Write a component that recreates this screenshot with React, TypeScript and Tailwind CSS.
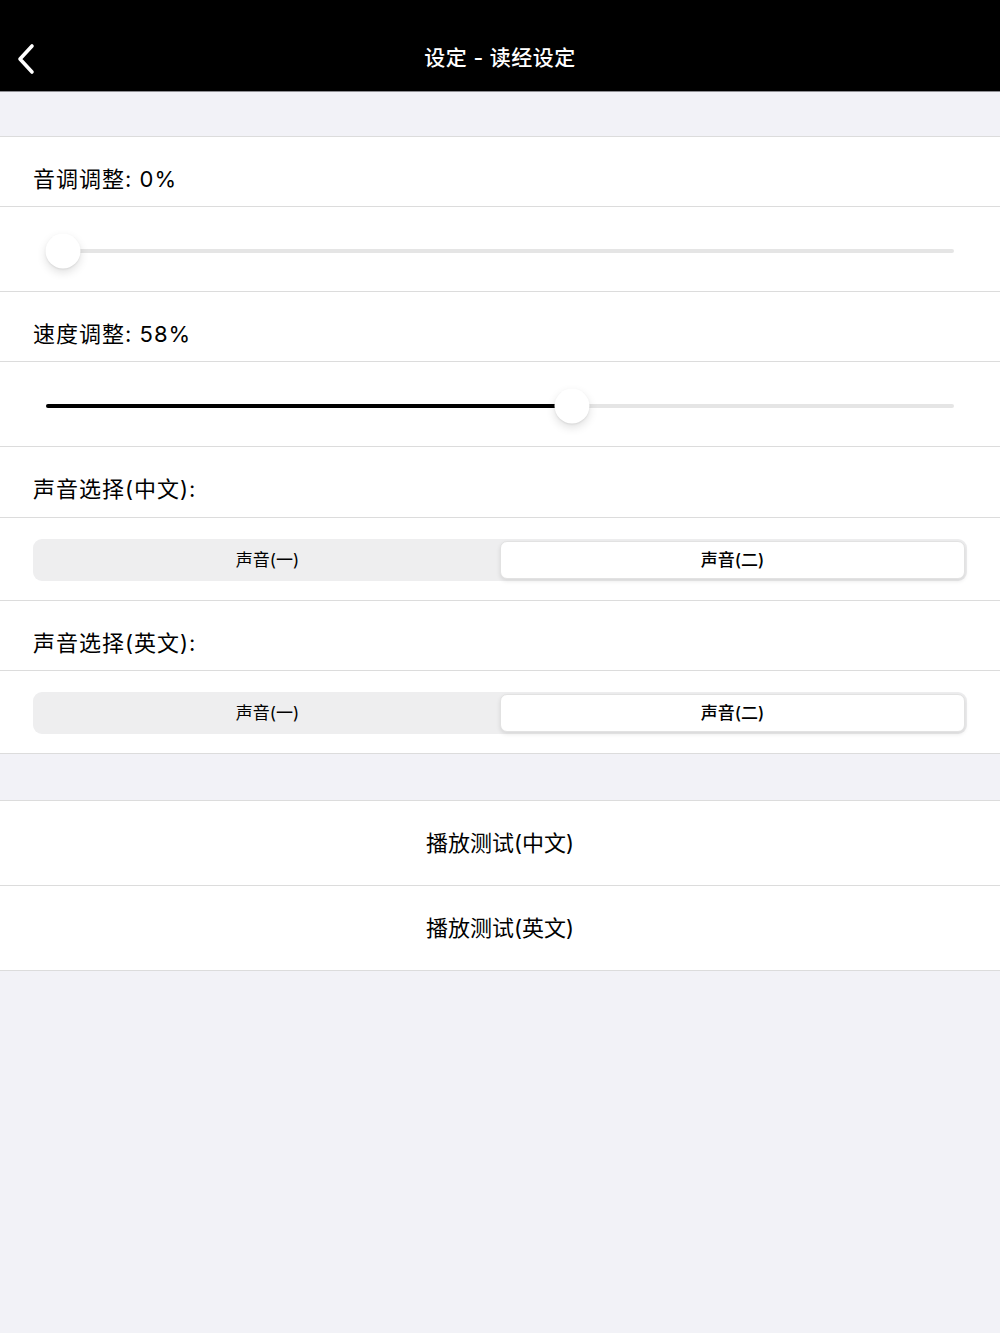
import React, { useState } from 'react';

const font = { fontFamily: 'Inter, "Noto Sans CJK SC", "Noto Sans", sans-serif' };

const LabelRow = ({ text, tall }: { text: string; tall?: boolean }) => (
    <div
        className={`${tall ? 'h-[71px]' : 'h-[70px]'} border-b border-[#dcdcdc] bg-white pl-[33px] pt-[29px] text-[22px] leading-[26px] tracking-[1px] text-black`}
    >
        {text}
    </div>
);

const SliderRow = ({ value }: { value: number }) => (
    <div className="h-[85px] border-b border-[#dcdcdc] bg-white flex items-center px-[46px] pt-[3px]">
        <div className="relative w-full h-[4px] rounded-full bg-[#e5e5e5]">
            <div className="absolute left-0 top-0 h-[4px] rounded-full bg-black" style={{ width: `${value}%` }} />
            <div
                className="absolute top-1/2 w-[35px] h-[35px] -translate-y-1/2 -translate-x-1/2 rounded-full bg-white shadow-[0_4px_10px_rgba(0,0,0,0.12),0_1px_2px_rgba(0,0,0,0.08)]"
                style={{ left: `calc(${value}% + ${17 - (30 * value) / 100}px)` }}
            />
        </div>
    </div>
);

const SegmentRow = ({ selected, onSelect }: { selected: number; onSelect: (i: number) => void }) => (
    <div className="h-[83px] border-b border-[#dcdcdc] bg-white px-[33px] pt-[21px]">
        <div className="w-full h-[42px] rounded-[9px] bg-[#eeeeef] p-[2px] grid grid-cols-2">
            {['声音(一)', '声音(二)'].map((t, i) => (
                <button
                    key={t}
                    onClick={() => onSelect(i)}
                    className={
                        selected === i
                            ? 'rounded-[7px] bg-white border border-[#e2e2e2] shadow-[0_2px_4px_rgba(0,0,0,0.1)] pt-[1px] text-[17px] font-medium text-black'
                            : 'rounded-[7px] pt-[1px] text-[17px] text-black'
                    }
                >
                    {t}
                </button>
            ))}
        </div>
    </div>
);

export default function App() {
    const [zh, setZh] = useState(1);
    const [en, setEn] = useState(1);

    return (
        <div className="w-[1000px] h-[1333px] bg-[#f2f2f7] flex flex-col" style={font}>
            {/* Header */}
            <div className="relative h-[92px] bg-black border-b border-[#8e8e93] flex items-center justify-center pt-[24px]">
                <button className="absolute left-[15px] top-[43px]">
                    <svg width="22" height="32" viewBox="0 0 22 32" fill="none">
                        <path d="M17 3 L5 16 L17 29" stroke="white" strokeWidth="3.6" strokeLinecap="round" strokeLinejoin="round" />
                    </svg>
                </button>
                <h1 className="text-[21px] font-medium text-white leading-[26px] tracking-[0.5px]">设定 - 读经设定</h1>
            </div>

            <div className="h-[44px]" />

            {/* Settings group */}
            <div className="border-t border-[#dcdcdc]">
                <LabelRow text="音调调整: 0%" />
                <SliderRow value={0} />
                <LabelRow text="速度调整: 58%" />
                <SliderRow value={58} />
                <LabelRow text="声音选择(中文):" tall />
                <SegmentRow selected={zh} onSelect={setZh} />
                <LabelRow text="声音选择(英文):" />
                <SegmentRow selected={en} onSelect={setEn} />
            </div>

            <div className="h-[46px]" />

            {/* Test buttons */}
            <div className="border-t border-[#dcdcdc]">
                {['播放测试(中文)', '播放测试(英文)'].map((t) => (
                    <button
                        key={t}
                        className="w-full h-[85px] border-b border-[#dcdcdc] bg-white flex items-center justify-center text-[22px] text-black"
                    >
                        {t}
                    </button>
                ))}
            </div>
        </div>
    );
}
